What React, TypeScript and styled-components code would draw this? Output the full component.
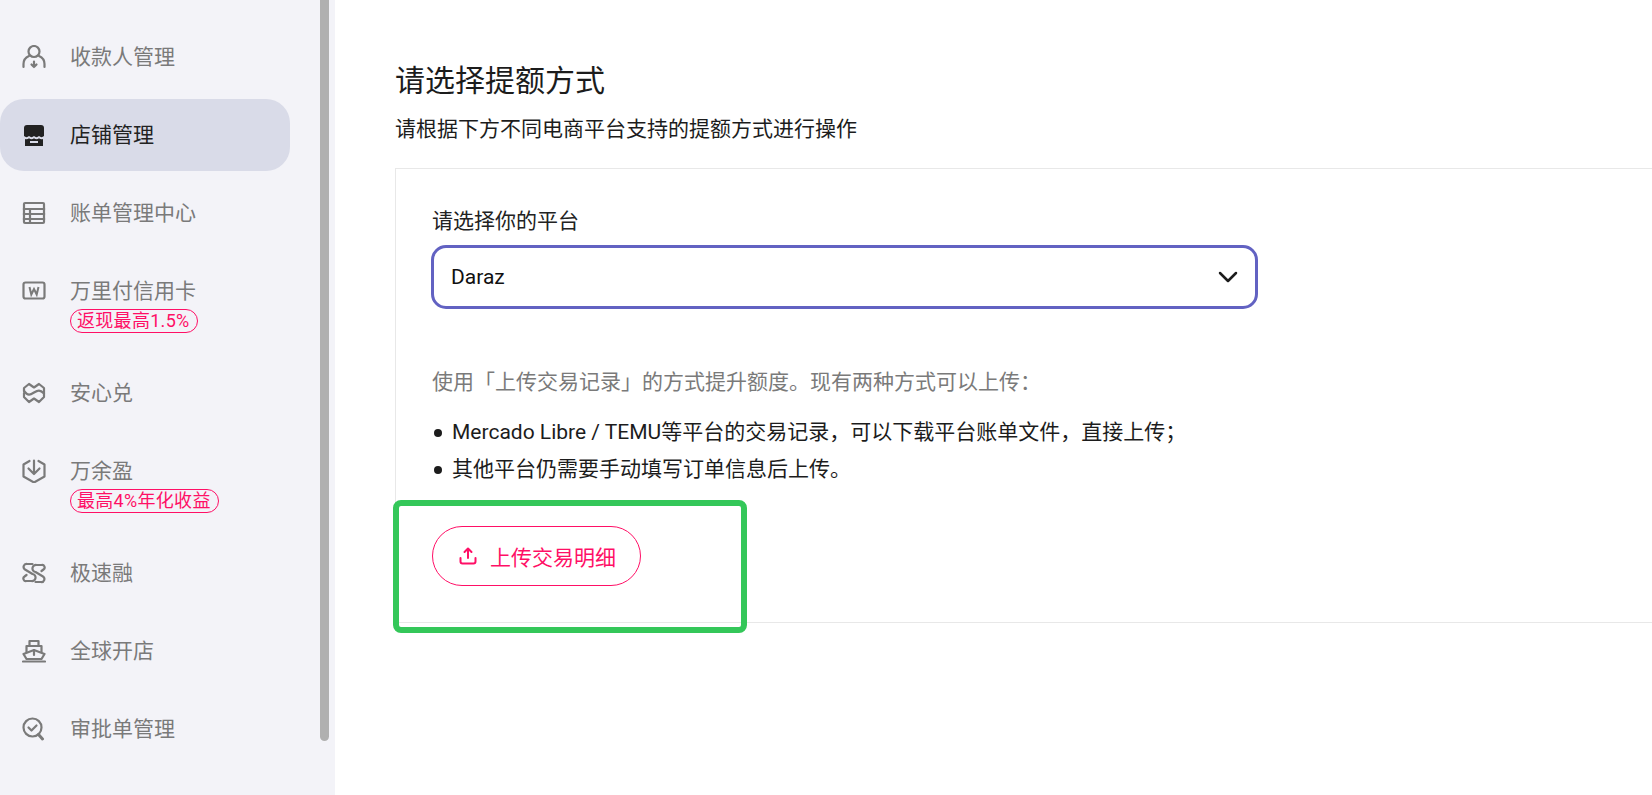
import React from "react";
import styled, { createGlobalStyle } from "styled-components";

const Global = createGlobalStyle`
  html, body { margin: 0; padding: 0; height: 100%; background: #fff; overflow: hidden; }
  body { font-family: Roboto, "Noto Sans CJK SC", sans-serif; }
  * { box-sizing: border-box; }
`;

const Page = styled.div`
  display: flex;
  width: 1652px;
  height: 795px;
  overflow: hidden;
`;

const Sidebar = styled.nav`
  position: relative;
  flex: 0 0 335px;
  height: 795px;
  overflow: hidden;
  background: #f3f3f8;
  padding-top: 21px;
  display: flex;
  flex-direction: column;
  gap: 6px;
`;

const Thumb = styled.div`
  position: absolute;
  left: 320px;
  top: 0;
  width: 9px;
  height: 741px;
  background: #b0b0b0;
  border-radius: 0 0 5px 5px;
`;

const Row = styled.div<{ $active?: boolean; $tall?: boolean }>`
  flex: none;
  width: 290px;
  height: ${(p) => (p.$tall ? "96px" : "72px")};
  padding: 21px 0 0 22px;
  display: flex;
  align-items: flex-start;
  gap: 24px;
  border-radius: 24px;
  background: ${(p) => (p.$active ? "#d9dbe8" : "transparent")};
  color: ${(p) => (p.$active ? "#222" : "#7a7a7a")};
`;

const IconBox = styled.span`
  flex: none;
  width: 24px;
  height: 30px;
  display: flex;
  align-items: center;
  justify-content: center;
`;

const RowBody = styled.div`
  display: flex;
  flex-direction: column;
  align-items: flex-start;
`;

const RowLabel = styled.span`
  font-size: 21px;
  line-height: 30px;
  white-space: nowrap;
`;

const Tag = styled.span`
  margin-top: 3px;
  height: 24px;
  padding: 0 7px 0 6px;
  border: 1px solid #ff0f66;
  border-radius: 12px;
  color: #ff0f66;
  font-size: 18px;
  letter-spacing: 0.3px;
  line-height: 22px;
  white-space: nowrap;
`;

const Main = styled.main`
  position: relative;
  flex: 1;
  min-width: 0;
  padding: 61px 0 0 60px;
`;

const Title = styled.h1`
  margin: 0;
  font-size: 30px;
  font-weight: 400;
  line-height: 40px;
  color: #1c1c1c;
`;

const Subtitle = styled.p`
  margin: 14px 0 0;
  font-size: 21px;
  line-height: 28px;
  color: #1c1c1c;
`;

const Card = styled.section`
  margin-top: 25px;
  width: 1400px;
  height: 455px;
  border: 1px solid #e8e8e8;
  padding: 38px 0 0 36px;
`;

const FieldLabel = styled.div`
  font-size: 21px;
  line-height: 28px;
  color: #222;
`;

const Select = styled.div`
  margin: 10px 0 0 -1px;
  width: 827px;
  height: 64px;
  border: 3px solid #6262c2;
  border-radius: 15px;
  padding: 0 17px;
  display: flex;
  align-items: center;
  justify-content: space-between;
  font-size: 21px;
  color: #111;
`;

const Hint = styled.p`
  margin: 59px 0 0;
  font-size: 21px;
  line-height: 28px;
  color: #7a7a7a;
`;

const Bullets = styled.ul`
  margin: 18px 0 0;
  padding: 0;
  list-style: none;
  font-size: 21px;
  line-height: 37px;
  color: #1c1c1c;
`;

const Bullet = styled.li`
  display: flex;
  align-items: center;
  gap: 10px;
  padding-left: 2px;
  &::before {
    content: "";
    flex: none;
    width: 8px;
    height: 8px;
    border-radius: 50%;
    background: #1c1c1c;
  }
`;

const UploadButton = styled.button`
  margin-top: 38px;
  width: 209px;
  height: 60px;
  border: 1px solid #ff0f66;
  border-radius: 30px;
  background: #fff;
  color: #ff0f66;
  display: flex;
  align-items: center;
  padding: 0 0 0 26px;
  gap: 13px;
  font: inherit;
  font-size: 21px;
`;

const Highlight = styled.div`
  position: absolute;
  left: 58px;
  top: 500px;
  width: 354px;
  height: 133px;
  border: 6px solid #34c759;
  border-radius: 8px;
  pointer-events: none;
`;

const stroke = {
  fill: "none",
  stroke: "currentColor",
  strokeWidth: 2.2,
  strokeLinecap: "round" as const,
  strokeLinejoin: "round" as const,
};

const Svg: React.FC<{ children: React.ReactNode }> = ({ children }) => (
  <svg width="24" height="24" viewBox="0 0 24 24">
    {children}
  </svg>
);

const PayeeIcon = () => (
  <Svg>
    <g {...stroke}>
      <circle cx="12" cy="6.500" r="5.500" />
      <path d="M7 11C3.500 12.500 1.500 15.500 1.500 19v3" />
      <path d="M17 11c3.500 1.500 5.500 4.500 5.500 8v3" />
      <path d="M12 16.500V22M9.500 19.500 12 22l2.500-2.500" />
    </g>
  </Svg>
);

const StoreIcon = () => (
  <Svg>
    <path fill="currentColor" d="M5 2h14a3 3 0 0 1 3 3v5H2V5a3 3 0 0 1 3-3Z" />
    <path fill="currentColor" d="M2 10h20v3c-1.500 1.500-3.500 1.500-5 0-1.500 1.500-3.500 1.500-5 0-1.500 1.500-3.500 1.500-5 0-1.500 1.500-3.500 1.500-5 0Z" />
    <path fill="currentColor" d="M3 16c1.500.5 3 .2 4-.8 1.500 1.300 3.500 1.300 5 0 1.500 1.300 3.500 1.300 5 0 1 1 2.500 1.300 4 .8V23H3Z" />
    <rect x="8" y="18" width="8" height="2" fill="#d9dbe8" />
  </Svg>
);

const BillIcon = () => (
  <Svg>
    <g {...stroke} strokeLinecap="square">
      <rect x="2" y="2" width="20" height="20" rx="1" />
      <path d="M2 8h20M2 13h20M2 18h20M8 8v14" />
    </g>
  </Svg>
);

const CardIcon = () => (
  <svg width="24" height="22" viewBox="0 0 24 22">
    <rect x="1.500" y="2.500" width="21" height="16" rx="2" fill="none" stroke="currentColor" strokeWidth="2.2" />
    <path d="m7.500 7 1.800 7.500L12 9l2.700 5.500L16.500 7" fill="none" stroke="currentColor" strokeWidth="2" />
  </svg>
);

const ExchangeIcon = () => (
  <Svg>
    <g {...stroke}>
      <path d="M2 10V7l5-4 5 3.500L17 3l5 4v9l-5 5-5-3.500L7 21l-5-5v-4" />
      <path d="M2 10c4 5 6 4 10 1.500s6-3 10 1" />
    </g>
  </Svg>
);

const YieldIcon = () => (
  <Svg>
    <g {...stroke}>
      <path d="M7.500 2 1.500 5.500v12L12 23.500l10.500-6v-12L16.500 2" />
      <path d="M12 1.500V14M6.500 9.500 12 15l5.500-5.500" />
    </g>
  </Svg>
);

const FastIcon = () => (
  <Svg>
    <g {...stroke}>
      <path d="M10.500 3H5a3 3 0 0 0-2 5.500L10.500 13a3.500 3.500 0 0 1-1 7H4.500a2.500 2.500 0 0 1-2-4.500L4.500 14" />
      <path d="M13.500 21H19a3 3 0 0 0 2-5.500L13.500 11a3.500 3.500 0 0 1 1-7h5a2.500 2.500 0 0 1 2 4.500L19.500 10" />
    </g>
  </Svg>
);

const ShipIcon = () => (
  <Svg>
    <g {...stroke}>
      <path d="M7.500 7V2h9v5M4.500 13V7h15v6" />
      <path d="M1.500 15 12 11l10.500 4-3 5h-15Z" />
      <path d="M12 11v5M1 22.500h22" />
    </g>
  </Svg>
);

const ReviewIcon = () => (
  <Svg>
    <g {...stroke}>
      <circle cx="10.500" cy="10.500" r="9" />
      <path d="m6.500 10.500 3 3 5-5" />
      <path d="m16.500 17.500 4 4.500" strokeWidth="3" />
    </g>
  </Svg>
);

const UploadIcon = () => (
  <svg width="18" height="18" viewBox="0 0 18 18">
    <g {...stroke} strokeWidth="2">
      <path d="M9 11V2M5.500 5 9 1.500 12.500 5" />
      <path d="M1.500 11v3.500a2 2 0 0 0 2 2h11a2 2 0 0 0 2-2V11" />
    </g>
  </svg>
);

const Chevron = () => (
  <svg width="20" height="12" viewBox="0 0 20 12">
    <path d="m2 2 8 8 8-8" fill="none" stroke="#1c1c1c" strokeWidth="2.500" strokeLinecap="round" strokeLinejoin="round" />
  </svg>
);

const items = [
  { label: "收款人管理", icon: <PayeeIcon /> },
  { label: "店铺管理", icon: <StoreIcon />, active: true },
  { label: "账单管理中心", icon: <BillIcon /> },
  { label: "万里付信用卡", icon: <CardIcon />, tag: "返现最高1.5%" },
  { label: "安心兑", icon: <ExchangeIcon /> },
  { label: "万余盈", icon: <YieldIcon />, tag: "最高4%年化收益" },
  { label: "极速融", icon: <FastIcon /> },
  { label: "全球开店", icon: <ShipIcon /> },
  { label: "审批单管理", icon: <ReviewIcon /> },
];

export default function App() {
  return (
    <Page>
      <Global />
      <Sidebar>
        {items.map((it) => (
          <Row key={it.label} $active={it.active} $tall={!!it.tag}>
            <IconBox>{it.icon}</IconBox>
            <RowBody>
              <RowLabel>{it.label}</RowLabel>
              {it.tag && <Tag>{it.tag}</Tag>}
            </RowBody>
          </Row>
        ))}
        <Thumb />
      </Sidebar>
      <Main>
        <Title>请选择提额方式</Title>
        <Subtitle>请根据下方不同电商平台支持的提额方式进行操作</Subtitle>
        <Card>
          <FieldLabel>请选择你的平台</FieldLabel>
          <Select>
            <span>Daraz</span>
            <Chevron />
          </Select>
          <Hint>使用「上传交易记录」的方式提升额度。现有两种方式可以上传：</Hint>
          <Bullets>
            <Bullet>Mercado Libre / TEMU等平台的交易记录，可以下载平台账单文件，直接上传；</Bullet>
            <Bullet>其他平台仍需要手动填写订单信息后上传。</Bullet>
          </Bullets>
          <UploadButton>
            <UploadIcon />
            上传交易明细
          </UploadButton>
        </Card>
        <Highlight />
      </Main>
    </Page>
  );
}
